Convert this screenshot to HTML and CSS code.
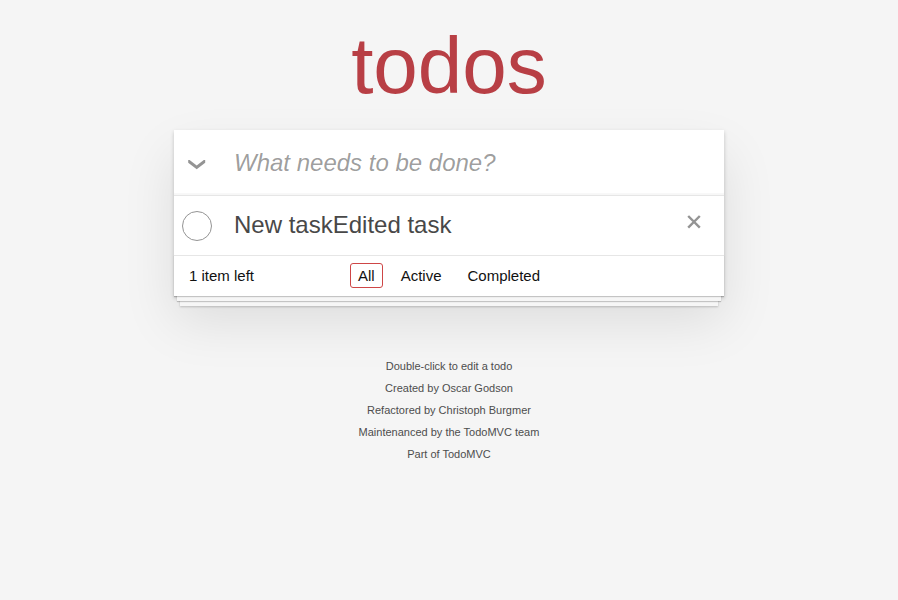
FILE: index.html
```html
<!DOCTYPE html>
<html lang="en">
<head>
<meta charset="utf-8">
<title>TodoMVC</title>
<link rel="stylesheet" href="styles.css">
</head>
<body>
<main class="page">
<section class="todoapp">
  <header class="header">
    <h1 class="title">todos</h1>
  </header>
  <div class="card">
    <div class="entry">
      <button class="toggle-all" type="button" aria-label="Mark all as complete">
        <svg class="icon" width="18" height="10" viewBox="0 0 18 10" aria-hidden="true"><path d="M0.2 0 L1.6 0 L8.7 5.4 L15.8 0 L17.2 0 V2.8 L8.7 9.2 L0.2 2.8Z" fill="#949494"/></svg>
      </button>
      <input class="new-todo" type="text" placeholder="What needs to be done?" aria-label="New todo">
    </div>
    <ul class="todo-list">
      <li class="todo">
        <input class="toggle" type="checkbox" id="todo-1">
        <label class="todo-label" for="todo-1">New taskEdited task</label>
        <button class="destroy" type="button" aria-label="Delete">
          <svg class="icon" width="14" height="14" viewBox="0 0 14 14" aria-hidden="true"><path d="M1.2 1 L12.8 12.6 M12.8 1 L1.2 12.6" stroke="#949494" stroke-width="2.4"/></svg>
        </button>
      </li>
    </ul>
    <footer class="footer">
      <span class="count">1 item left</span>
      <nav class="filters">
        <a class="filter selected" href="#/">All</a>
        <a class="filter" href="#/active">Active</a>
        <a class="filter" href="#/completed">Completed</a>
      </nav>
    </footer>
  </div>
</section>
<footer class="info">
  <p>Double-click to edit a todo</p>
  <p>Created by <a href="#oscar">Oscar Godson</a></p>
  <p>Refactored by <a href="#christoph">Christoph Burgmer</a></p>
  <p>Maintenanced by the TodoMVC team</p>
  <p>Part of <a href="#todomvc">TodoMVC</a></p>
</footer>
</main>
</body>
</html>
```
FILE: styles.css
```css
* { box-sizing: border-box; }

html { background: #f5f5f5; }

body {
  margin: 0;
  color: #111;
  font: 14px/20px "Liberation Sans", Arial, sans-serif;
}

.page {
  max-width: 550px;
  margin: 0 auto;
}

button, input { font: inherit; }

button {
  padding: 0;
  border: 0;
  background: none;
}

.icon {
  display: block;
  margin: 0 auto;
}

.title {
  margin: 0;
  padding: 21px 0 19px;
  color: #b83f45;
  font-size: 80px;
  font-weight: 400;
  line-height: 90px;
  text-align: center;
}

.card {
  background: #fff;
  box-shadow:
    0 2px 4px rgba(0, 0, 0, 0.2),
    0 25px 50px rgba(0, 0, 0, 0.1);
}

.entry {
  display: flex;
  height: 65px;
  box-shadow: inset 0 -2px 1px rgba(0, 0, 0, 0.03);
}

.toggle-all { width: 45px; padding-top: 4px; }

.new-todo {
  flex: 1;
  min-width: 0;
  padding: 0 16px 0 15px;
  border: 0;
  outline: 0;
  background: none;
  font-size: 24px;
}

.new-todo::placeholder {
  color: rgba(0, 0, 0, 0.4);
  font-style: italic;
}

.todo-list {
  margin: 0;
  padding: 0;
  border-top: 1px solid #e6e6e6;
  list-style: none;
}

.todo {
  display: flex;
  align-items: center;
  height: 59px;
}

.toggle {
  width: 30px;
  height: 30px;
  margin: 0 0 0 8px;
  border: 1px solid #949494;
  border-radius: 50%;
  appearance: none;
}

.todo-label {
  flex: 1;
  padding: 0 0 2px 22px;
  color: #484848;
  font-size: 24px;
  line-height: 28px;
}

.destroy {
  width: 40px;
  height: 40px;
  margin: 0 10px 7px 0;
}

.footer {
  position: relative;
  display: grid;
  grid-template-columns: 1fr auto 1fr;
  align-items: start;
  height: 41px;
  padding: 7px 15px;
  border-top: 1px solid #e6e6e6;
  font-size: 15px;
  line-height: 25px;
}

.footer::before {
  content: "";
  position: absolute;
  inset: auto 0 0;
  height: 41px;
  box-shadow:
    0 1px 1px rgba(0, 0, 0, 0.2),
    0 8px 0 -3px #f6f6f6,
    0 9px 1px -3px rgba(0, 0, 0, 0.2),
    0 16px 0 -6px #f6f6f6,
    0 17px 2px -6px rgba(0, 0, 0, 0.2);
  pointer-events: none;
}

.filters { display: flex; gap: 10px; }

.filter {
  padding: 0 7px;
  border: 1px solid transparent;
  border-radius: 3px;
  color: inherit;
  line-height: 23px;
  text-decoration: none;
}

.filter.selected { border-color: #ce4646; }

.info {
  margin-top: 65px;
  color: #4d4d4d;
  font-size: 11px;
  line-height: 11px;
  text-align: center;
}

.info p { margin: 0 0 11px; }

.info a { color: inherit; text-decoration: none; }
```
